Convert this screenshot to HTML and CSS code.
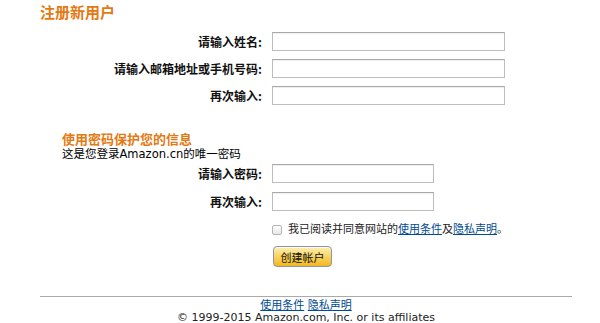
FILE: index.html
```html
<!DOCTYPE html>
<html lang="zh-CN">
<head>
<meta charset="utf-8">
<title>注册新用户</title>
<link rel="stylesheet" href="styles.css">
</head>
<body>
<div class="page">
  <h1 class="title">注册新用户</h1>
  <div class="form form-main">
    <label class="lbl">请输入姓名:</label>
    <input class="field field-wide" type="text">
    <label class="lbl">请输入邮箱地址或手机号码:</label>
    <input class="field field-wide" type="text">
    <label class="lbl">再次输入:</label>
    <input class="field field-wide" type="text">
  </div>

  <div class="section">
    <h2 class="section-title">使用密码保护您的信息</h2>
    <p class="section-sub">这是您登录Amazon.cn的唯一密码</p>
  </div>

  <div class="form form-pass">
    <label class="lbl">请输入密码:</label>
    <input class="field field-narrow" type="password">
    <label class="lbl">再次输入:</label>
    <input class="field field-narrow" type="password">
  </div>

  <div class="agree">
    <span class="box"></span>
    <span class="agree-text">我已阅读并同意网站的<a href="#">使用条件</a>及<a href="#">隐私声明</a>。</span>
  </div>

  <div class="actions">
    <button class="btn" type="button">创建帐户</button>
  </div>

  <footer class="footer">
    <div class="footer-links"><a href="#">使用条件</a> <a href="#">隐私声明</a></div>
    <div class="copy">© 1999-2015 Amazon.com, Inc. or its affiliates</div>
  </footer>
</div>
</body>
</html>
```
FILE: styles.css
```css
html, body {
  margin: 0;
  padding: 0;
  background: #fff;
}
body {
  font-family: "DejaVu Sans", "Noto Sans CJK SC", sans-serif;
  font-size: 11px;
  color: #000;
}
.page {
  width: 532px;
  padding-left: 40px;
}
.title {
  margin: 0;
  padding-top: 3px;
  font-size: 15px;
  line-height: 18px;
  font-weight: bold;
  color: #e47911;
  font-family: "Noto Sans CJK SC", sans-serif;
}
.form {
  display: grid;
  grid-template-columns: 222px auto;
  column-gap: 10px;
  align-items: center;
  justify-items: start;
}
.form-main {
  margin-top: 11px;
  row-gap: 8px;
}
.form-pass {
  margin-top: 3px;
  row-gap: 9px;
}
.lbl {
  justify-self: end;
  font-weight: bold;
  font-size: 12px;
  line-height: 14px;
  font-family: "Noto Sans CJK SC", sans-serif;
  color: #111;
}
.field {
  box-sizing: border-box;
  height: 19px;
  margin: 0;
  padding: 1px 3px;
  border: 1px solid #bdbdbd;
  border-top-color: #a9a9a9;
  box-shadow: inset 0 1px 1px #eee;
  background: #fff;
  font-size: 11px;
}
.field-wide { width: 233px; }
.field-narrow { width: 162px; }
.section {
  margin: 25px 0 0 22px;
}
.section-title {
  margin: 0;
  font-size: 13px;
  line-height: 17px;
  font-weight: bold;
  color: #e47911;
  font-family: "Noto Sans CJK SC", sans-serif;
}
.section-sub {
  margin: 0;
  font-size: 11.5px;
  line-height: 14px;
}
.agree {
  display: flex;
  align-items: center;
  gap: 6px;
  margin: 12px 0 0 232px;
}
.box {
  box-sizing: border-box;
  width: 10px;
  height: 10px;
  border: 1px solid #b5b5b5;
  border-radius: 2px;
  background: linear-gradient(#fff, #e6e6e6);
}
.agree-text {
  font-size: 11px;
  line-height: 14px;
  color: #222;
}
a {
  color: #004b91;
  text-decoration: underline;
}
.actions {
  margin: 9px 0 0 233px;
}
.btn {
  box-sizing: border-box;
  width: 59px;
  height: 21px;
  padding: 0;
  border: 1px solid #8a93b0;
  border-radius: 4px;
  background: linear-gradient(#fdf0b3 0%, #f9d76a 45%, #f2b81e 100%);
  box-shadow: inset 0 1px 0 rgba(255,255,255,0.7);
  font-family: "Noto Sans CJK SC", sans-serif;
  font-size: 11px;
  color: #111;
}
.footer {
  margin-top: 29px;
  border-top: 1px solid #aaa;
  text-align: center;
  font-size: 11px;
  line-height: 12px;
  padding-top: 1px;
}
.footer-links a {
  font-family: "Noto Sans CJK SC", sans-serif;
}
.copy {
  color: #222;
}
```
